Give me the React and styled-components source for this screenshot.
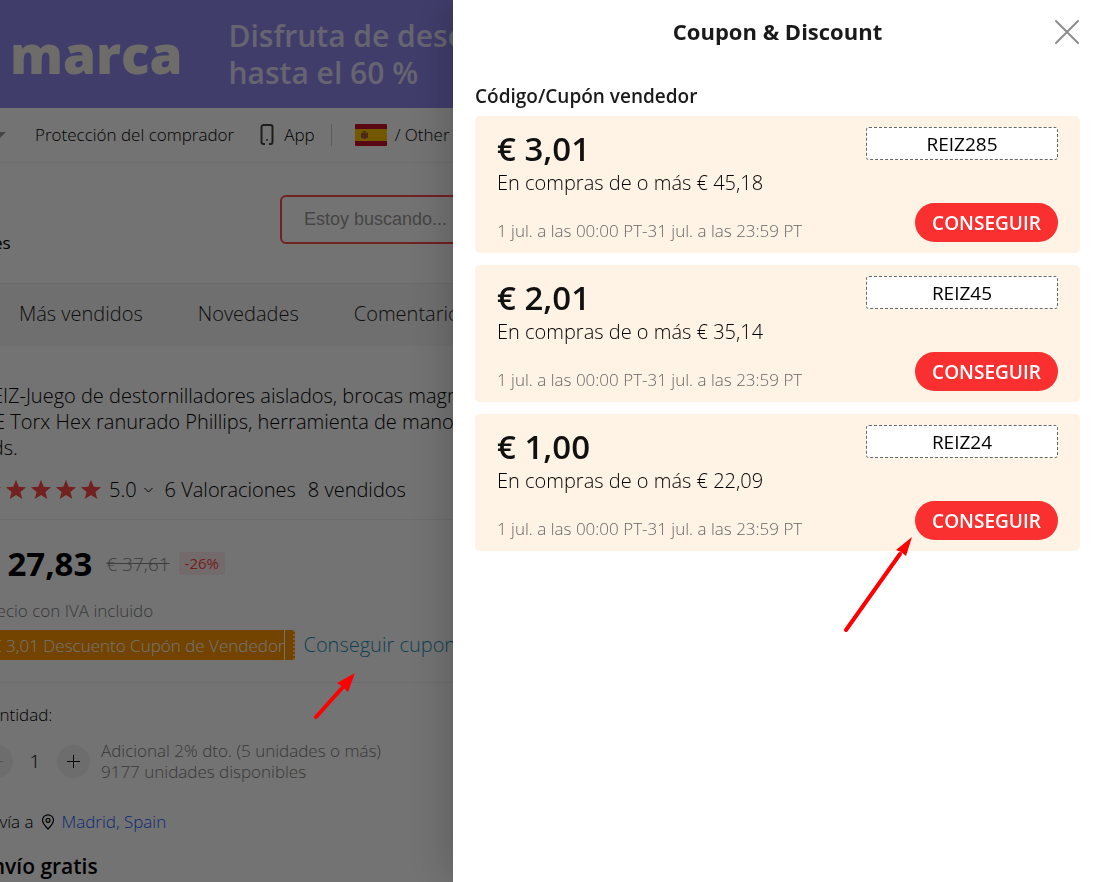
import React from "react";
import styled, { createGlobalStyle } from "styled-components";

const GlobalStyle = createGlobalStyle`
  *, *::before, *::after { box-sizing: border-box; }
  body {
    margin: 0;
    overflow: hidden;
    background: #fff;
    color: #000;
    font-family: "Open Sans", "Noto Sans", sans-serif;
  }
  button, input { font-family: inherit; }
  h1, h2, h3, p, ul { margin: 0; padding: 0; }
  a { color: inherit; text-decoration: none; }
`;

const Store = styled.main`
  height: 100vh;
  overflow: hidden;
  white-space: nowrap;
  font-weight: 300;
`;

const Banner = styled.div`
  display: flex;
  align-items: center;
  gap: 46px;
  height: 108px;
  padding-left: 10px;
  background: #8e88ee;
  color: #fff;
`;

const BannerBrand = styled.strong`
  font-size: 53px;
  line-height: 60px;
  font-weight: 800;
  color: #f2f0e8;
`;

const BannerText = styled.p`
  font-size: 30px;
  line-height: 37px;
  font-weight: 550;
  color: #e0def8;
`;

const TopBar = styled.nav`
  display: flex;
  align-items: center;
  height: 55px;
  padding-bottom: 1px;
  border-bottom: 1px solid #f2f2f2;
  font-size: 17px;
  line-height: 24px;
`;

const Caret = styled.svg`
  width: 12px;
  height: 6px;
  margin: 0 29px 0 -6px;
`;

const TopLink = styled.a`
  display: flex;
  align-items: center;
  gap: ${(p) => p.$gap || 8}px;
  margin-right: ${(p) => p.$after || 0}px;
`;

const Separator = styled.span`
  width: 1px;
  height: 22px;
  margin-right: 23px;
  background: #ccc;
`;

const SearchHeader = styled.header`
  display: flex;
  height: 121px;
  padding-top: 32px;
  border-bottom: 1px solid #ececec;
`;

const StoreMeta = styled.span`
  flex: 0 0 294px;
  margin-left: -14px;
  padding-top: 36px;
  font-size: 17px;
  line-height: 24px;
  font-weight: 400;
`;

const SearchInput = styled.input`
  flex: 1;
  height: 49px;
  padding: 0 22px;
  border: 2px solid #ff4747;
  border-radius: 6px;
  background: transparent;
  font-family: "Liberation Sans", Arial, sans-serif;
  font-size: 18px;
  &::placeholder { color: #999; opacity: 1; }
`;

const Tabs = styled.nav`
  display: flex;
  align-items: center;
  gap: 55px;
  height: 62px;
  padding: 0 0 2px 19px;
  background: #f7f7f7;
  color: #222;
  font-size: 20px;
  line-height: 26px;
`;

const Product = styled.section`
  margin-left: -20px;
`;

const Block = styled.div`
  padding: ${(p) => p.$pad};
  border-bottom: 1px solid #f2f2f2;
`;

const ProductTitle = styled.h1`
  font-size: 20px;
  line-height: 26px;
  font-weight: 300;
`;

const Row = styled.div`
  display: flex;
  align-items: center;
  height: ${(p) => p.$h}px;
  margin-top: ${(p) => p.$top || 0}px;
  gap: ${(p) => p.$gap || 0}px;
`;

const Stars = styled.span`
  display: flex;
  gap: 3px;
  color: #ff4747;
  svg { width: 22px; height: 22px; }
`;

const Stat = styled.span`
  display: flex;
  align-items: center;
  gap: 7px;
  font-size: 20px;
  line-height: 26px;
`;

const Price = styled.strong`
  font-size: 33px;
  line-height: 46px;
  font-weight: 700;
`;

const OldPrice = styled.s`
  margin-left: 14px;
  color: #888;
  font-size: 19px;
  line-height: 24px;
`;

const Discount = styled.span`
  margin-left: 9px;
  padding: 0 6px;
  border-radius: 2px;
  background: #ffeded;
  color: #ff4747;
  font-size: 15px;
  line-height: 23px;
  font-weight: 400;
`;

const Muted = styled.p`
  color: #7c7c7c;
  font-size: 17px;
  line-height: ${(p) => p.$lh || 24}px;
`;

const Ticket = styled.span`
  display: flex;
  align-items: center;
  height: 30px;
  padding-left: 12px;
  background: #ff9800;
  color: #fff;
  font-size: 17px;
`;

const TicketStub = styled.span`
  width: 11px;
  height: 30px;
  border-left: 1px solid #fff;
  border-right: 2px dotted #ffd79a;
`;

const CouponLink = styled.a`
  margin-left: 8px;
  color: #1f8fb8;
  font-size: 20px;
  line-height: 26px;
`;

const Label = styled.p`
  font-size: 17px;
  line-height: 24px;
`;

const Stepper = styled.div`
  display: flex;
  align-items: center;
  margin-right: 11px;
`;

const StepButton = styled.button`
  display: flex;
  align-items: center;
  justify-content: center;
  width: 33px;
  height: 33px;
  padding: 0;
  border: 0;
  border-radius: 50%;
  background: #f2f2f2;
  color: ${(p) => (p.disabled ? "#bbb" : "#000")};
`;

const Quantity = styled.input`
  width: 44px;
  padding: 0;
  border: 0;
  background: transparent;
  color: #000;
  font-size: 19px;
  line-height: 24px;
  font-weight: 300;
  text-align: center;
`;

const City = styled.a`
  color: #1a5cff;
`;

const Shipping = styled.h3`
  font-size: 21px;
  line-height: 28px;
  font-weight: 650;
`;

const Overlay = styled.div`
  position: fixed;
  inset: 0;
  display: flex;
`;

const Scrim = styled.div`
  flex: 0 0 453px;
  background: rgba(0, 0, 0, 0.55);
`;

const Drawer = styled.aside`
  flex: 1;
  min-width: 0;
  padding: 12px 19px 0 22px;
  background: #fff;
  box-shadow: 0 0 48px rgba(0, 0, 0, 0.25);
`;

const DrawerHead = styled.header`
  display: grid;
  grid-template-columns: 26px 1fr 26px;
  align-items: center;
  height: 40px;
`;

const DrawerTitle = styled.h2`
  grid-column: 2;
  padding-bottom: 2px;
  font-size: 22px;
  line-height: 30px;
  font-weight: 700;
  text-align: center;
  color: #1a1a1a;
`;

const CloseButton = styled.button`
  display: flex;
  padding: 0;
  border: 0;
  background: none;
  color: #8c8c8c;
`;

const SectionTitle = styled.h3`
  margin-top: 31px;
  font-size: 19px;
  line-height: 26px;
  font-weight: 550;
  color: #1a1a1a;
`;

const CouponList = styled.ul`
  display: flex;
  flex-direction: column;
  gap: 12px;
  margin: 7px 0 0;
  list-style: none;
`;

const CouponCard = styled.li`
  display: flex;
  justify-content: space-between;
  height: 137px;
  padding: 11px 22px;
  border-radius: 5px;
  background: #fff3e5;
`;

const CouponInfo = styled.div`
  display: flex;
  flex-direction: column;
`;

const Amount = styled.strong`
  font-size: 33px;
  line-height: 44px;
  font-weight: 550;
  color: #111;
`;

const Condition = styled.span`
  font-size: 20px;
  line-height: 24px;
  font-weight: 300;
`;

const Validity = styled.span`
  margin-top: 24px;
  color: #666;
  font-size: 17px;
  line-height: 24px;
  font-weight: 300;
`;

const CouponAction = styled.div`
  display: flex;
  flex-direction: column;
  align-items: flex-end;
  justify-content: space-between;
`;

const Code = styled.span`
  width: 192px;
  height: 33px;
  border: 1px dashed #666;
  border-radius: 3px;
  background: #fff;
  font-size: 19px;
  line-height: 32px;
  font-weight: 500;
  text-align: center;
`;

const GetButton = styled.button`
  height: 39px;
  width: 143px;
  padding: 0;
  border: 0;
  border-radius: 20px;
  background: #fa2f2f;
  color: #fff;
  font-size: 19px;
  line-height: 26px;
  font-weight: 600;
`;

const Pointers = styled.svg`
  position: fixed;
  top: 0;
  left: 0;
  width: 1px;
  height: 1px;
  overflow: visible;
  pointer-events: none;
`;

const coupons = [
  { amount: "€ 3,01", min: "€ 45,18", code: "REIZ285" },
  { amount: "€ 2,01", min: "€ 35,14", code: "REIZ45" },
  { amount: "€ 1,00", min: "€ 22,09", code: "REIZ24" },
];

const Star = () => (
  <svg viewBox="0 0 22 22" aria-hidden="true">
    <path d="M11 .8l2.700 6.900 7.400.5-5.700 4.700 1.900 7.200L11 16.100l-6.300 4 1.900-7.200L.9 8.200l7.400-.5z" fill="currentColor" />
  </svg>
);

const Phone = () => (
  <svg width="14" height="21" viewBox="0 0 14 21" fill="none" stroke="#444" strokeWidth="2" aria-hidden="true">
    <path d="M5 20H3.500A2 2 0 0 1 1.500 18V3a2 2 0 0 1 2-2h7a2 2 0 0 1 2 2v15a2 2 0 0 1-2 2H9" />
    <circle cx="7" cy="16" r="1" fill="#444" stroke="none" />
  </svg>
);

const Flag = () => (
  <svg width="32" height="22" viewBox="0 0 32 22" role="img" aria-label="España">
    <rect width="32" height="22" rx="1" fill="#c8102e" />
    <rect y="5" width="32" height="12" fill="#ffc400" />
    <path d="M7 8.500h5v4a2.500 2.500 0 0 1-5 0z" fill="#b0543a" />
    <path d="M6.500 9v5M12.500 9v5M8 7.500h3" stroke="#8a6d3b" strokeWidth="1" />
  </svg>
);

const Pin = () => (
  <svg width="14" height="16" viewBox="0 0 14 16" fill="none" stroke="#000" strokeWidth="1.200" aria-hidden="true">
    <path d="M7 15C3.500 11.500 1.500 9 1.500 6.300a5.500 5.500 0 0 1 11 0C12.500 9 10.500 11.500 7 15z" />
    <circle cx="7" cy="6.300" r="2" />
  </svg>
);

export default function App() {
  return (
    <>
      <GlobalStyle />
      <Store>
        <Banner>
          <BannerBrand>marca</BannerBrand>
          <BannerText>
            Disfruta de descuentos
            <br />
            hasta el 60 %
          </BannerText>
        </Banner>
        <TopBar>
          <Caret viewBox="0 0 12 6" aria-hidden="true">
            <path d="M0 0h12L6 6z" fill="#999" />
          </Caret>
          <TopLink href="#" $after={26}>Protección del comprador</TopLink>
          <TopLink href="#" $gap={10} $after={16}>
            <Phone />
            App
          </TopLink>
          <Separator />
          <TopLink href="#">
            <Flag />/ Other
          </TopLink>
        </TopBar>
        <SearchHeader>
          <StoreMeta>res</StoreMeta>
          <SearchInput aria-label="Buscar" placeholder="Estoy buscando..." />
        </SearchHeader>
        <Tabs>
          <a href="#">Más vendidos</a>
          <a href="#">Novedades</a>
          <a href="#">Comentarios</a>
        </Tabs>
        <Product>
          <Block $pad="37px 0 0">
            <ProductTitle>
              REIZ-Juego de destornilladores aislados, brocas magnéticas
              <br />
              DE Torx Hex ranurado Phillips, herramienta de mano
              <br />
              uds.
            </ProductTitle>
            <Row $h={58} $gap={12}>
              <Stat>
                <Stars>
                  <Star />
                  <Star />
                  <Star />
                  <Star />
                  <Star />
                </Stars>
                5.0
                <svg width="9" height="6" viewBox="0 0 9 6" fill="none" stroke="#000" aria-hidden="true">
                  <path d="M.5 1l4 4 4-4" />
                </svg>
              </Stat>
              <Stat>6 Valoraciones</Stat>
              <Stat>8 vendidos</Stat>
            </Row>
          </Block>
          <Block $pad="15px 0 22px">
            <Row $h={57}>
              <Price>€ 27,83</Price>
              <OldPrice>€ 37,61</OldPrice>
              <Discount>-26%</Discount>
            </Row>
            <Row $h={38}>
              <Muted>Precio con IVA incluido</Muted>
            </Row>
            <Row $h={30}>
              <Ticket>
                € 3,01 Descuento Cupón de Vendedor
                <TicketStub />
              </Ticket>
              <CouponLink href="#">Conseguir cupones</CouponLink>
            </Row>
          </Block>
          <Row $h={64}>
            <Label as="label" htmlFor="qty">Cantidad:</Label>
          </Row>
          <Row $h={28}>
            <Stepper>
              <StepButton aria-label="Menos" disabled>
                <svg width="13" height="13" stroke="currentColor" aria-hidden="true">
                  <path d="M0 6.500h13" />
                </svg>
              </StepButton>
              <Quantity id="qty" defaultValue="1" />
              <StepButton aria-label="Más">
                <svg width="13" height="13" stroke="currentColor" aria-hidden="true">
                  <path d="M0 6.500h13M6.500 0v13" />
                </svg>
              </StepButton>
            </Stepper>
            <div>
              <Muted $lh={21}>Adicional 2% dto. (5 unidades o más)</Muted>
              <Muted $lh={21}>9177 unidades disponibles</Muted>
            </div>
          </Row>
          <Row $h={60} $top={17} $gap={7}>
            <Label>Envía a</Label>
            <Pin />
            <Label>
              <City href="#">Madrid, Spain</City>
            </Label>
          </Row>
          <Shipping>Envío gratis</Shipping>
        </Product>
      </Store>
      <Overlay>
        <Scrim />
        <Drawer role="dialog" aria-label="Coupon & Discount">
          <DrawerHead>
            <DrawerTitle>Coupon &amp; Discount</DrawerTitle>
            <CloseButton aria-label="Cerrar">
              <svg width="26" height="26" stroke="currentColor" strokeWidth="2" strokeLinecap="round" aria-hidden="true">
                <path d="M2 2l22 22M24 2L2 24" />
              </svg>
            </CloseButton>
          </DrawerHead>
          <SectionTitle>Código/Cupón vendedor</SectionTitle>
          <CouponList>
            {coupons.map((c) => (
              <CouponCard key={c.code}>
                <CouponInfo>
                  <Amount>{c.amount}</Amount>
                  <Condition>En compras de o más {c.min}</Condition>
                  <Validity>1 jul. a las 00:00 PT-31 jul. a las 23:59 PT</Validity>
                </CouponInfo>
                <CouponAction>
                  <Code>{c.code}</Code>
                  <GetButton>CONSEGUIR</GetButton>
                </CouponAction>
              </CouponCard>
            ))}
          </CouponList>
        </Drawer>
      </Overlay>
      <Pointers aria-hidden="true" fill="#f00" stroke="#f00" strokeLinecap="round">
        <path d="M316 717L343 687" strokeWidth="4" />
        <path d="M355 673L348 692 343 687 337 683z" stroke="none" />
        <path d="M846 630L900 554" strokeWidth="4" />
        <path d="M912 537L906 556 901 552 896 550z" stroke="none" />
      </Pointers>
    </>
  );
}
